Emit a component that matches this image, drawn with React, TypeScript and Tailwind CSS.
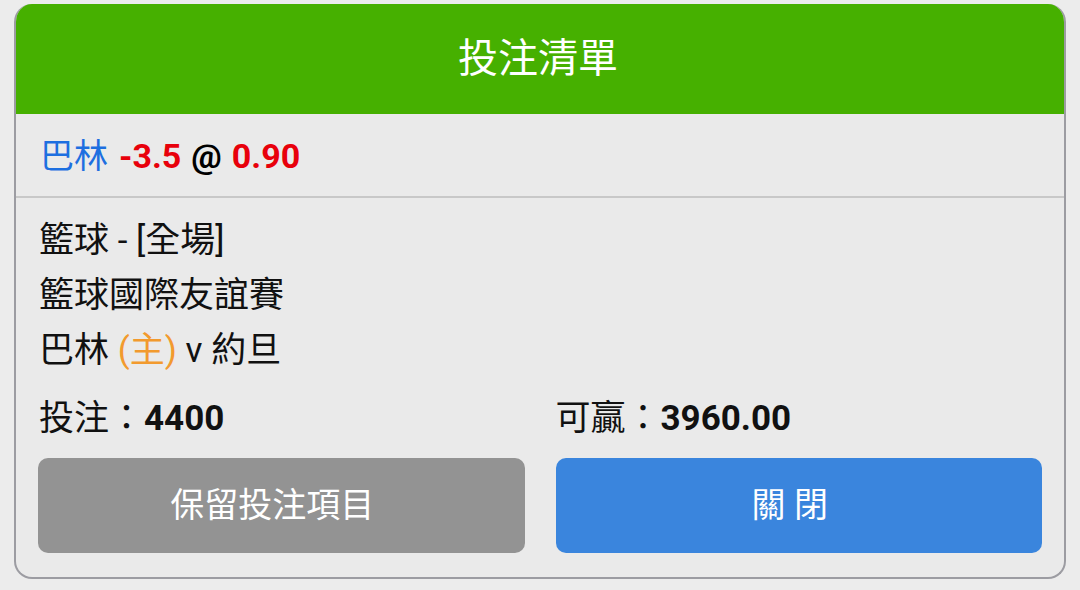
import React from "react";

const cjk = { fontFamily: 'Roboto, "Noto Sans CJK TC", sans-serif' };

export default function App() {
  return (
    <div className="w-[1080px] h-[590px] bg-[#ececec] pt-[4px] pl-[14px]" style={cjk}>
      <div className="w-[1052px] h-[575px] rounded-[18px] overflow-hidden border-2 border-t-0 border-[#9c9ca2] bg-[#eaeaea] flex flex-col">
        <div className="h-[110px] bg-[#46b000] flex items-center justify-center text-white text-[40px] leading-none -mx-[2px] pb-[1px] pr-[4px]">
          投注清單
        </div>
        <div className="h-[84px] flex items-center pl-[24px] pt-[2px] text-[34px] leading-none border-b-2 border-[#c8c8c8]">
          <span className="text-[#1d6fe0]">巴林</span>
          <span className="text-[#e8000b] font-bold ml-[11px]">-3.5</span>
          <span className="text-black font-bold ml-[10px]">@</span>
          <span className="text-[#e8000b] font-bold ml-[10px]">0.90</span>
        </div>
        <div className="flex flex-col px-[22px] pt-[15px] text-[#111] text-[35px] leading-[55px]">
          <div className="pl-[1px]">籃球 - [全場]</div>
          <div className="pl-[1px]">籃球國際友誼賽</div>
          <div className="pl-[1px]">
            巴林 <span className="text-[#f29a2e]">(主)</span> v 約旦
          </div>
          <div className="grid grid-cols-2 gap-[31px] mt-[13px]">
            <div className="pl-[1px]">
              投注：<span className="font-bold">4400</span>
            </div>
            <div className="pl-[0px]">
              可贏：<span className="font-bold">3960.00</span>
            </div>
          </div>
          <div className="grid grid-cols-2 gap-[31px] mt-[12px]">
            <div className="h-[95px] rounded-[10px] bg-[#939393] text-white text-[34px] flex items-center justify-center pr-[18px]">
              保留投注項目
            </div>
            <div className="h-[95px] rounded-[10px] bg-[#3a85dd] text-white text-[34px] flex items-center justify-center pr-[18px]">
              關 閉
            </div>
          </div>
        </div>
      </div>
    </div>
  );
}
